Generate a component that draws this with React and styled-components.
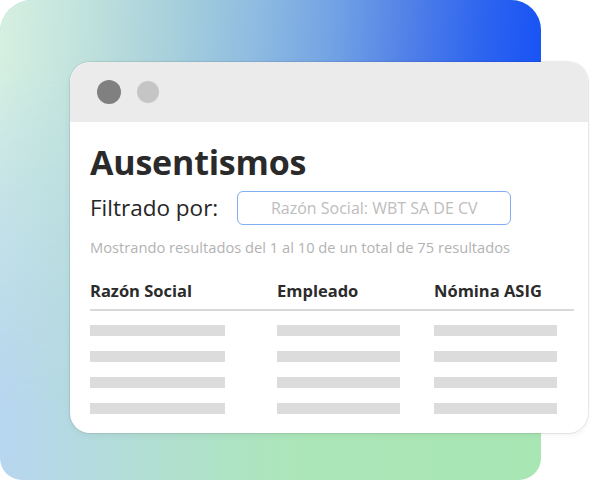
import React from 'react';
import styled, { createGlobalStyle } from 'styled-components';

const GlobalStyle = createGlobalStyle`
    html, body {
        margin: 0;
        padding: 0;
        background: #ffffff;
    }
    body {
        font-family: "Open Sans", "Noto Sans", sans-serif;
    }
`

const Stage = styled.div`
    width: 590px;
    height: 482px;
    display: grid;
    grid-template: 1fr / 1fr;
    overflow: hidden;
`

const Backdrop = styled.div`
    grid-area: 1 / 1;
    width: 541px;
    height: 480px;
    border-radius: 32px 30px 22px 22px;
    position: relative;
    overflow: hidden;
    background: linear-gradient(to right, #b7d6f0 0%, #b1dfd0 30%, #abe6b8 55%, #a8e6b4 100%);
    &::after {
        content: '';
        position: absolute;
        inset: 0;
        background: linear-gradient(94deg, #d6f0e1 0%, #bfe1dc 16%, #a4cedc 32%, #8ebbe1 45%, #73a3e4 58%, #507fe8 72%, #2e65ef 84%, #1a55f5 94%);
        -webkit-mask-image: linear-gradient(to bottom, #000 0%, #000 14%, rgba(0,0,0,0.55) 40%, transparent 85%);
        mask-image: linear-gradient(to bottom, #000 0%, #000 14%, rgba(0,0,0,0.55) 40%, transparent 85%);
    }
`

const Window = styled.div`
    grid-area: 1 / 1;
    z-index: 1;
    align-self: start;
    justify-self: start;
    margin: 62px 0 0 70px;
    width: 518px;
    height: 371px;
    border-radius: 20px;
    background: #ffffff;
    box-shadow: 0 0 0 1px rgba(0, 0, 0, 0.07), 0 2px 6px rgba(0, 0, 0, 0.06);
    overflow: hidden;
    display: flex;
    flex-direction: column;
`

const TitleBar = styled.div`
    height: 60px;
    background: #ebebeb;
    display: flex;
    align-items: center;
    gap: 16px;
    padding-left: 27px;
`

const Dot = styled.span`
    width: ${p => p.$size}px;
    height: ${p => p.$size}px;
    border-radius: 50%;
    background: ${p => p.$color};
`

const Body = styled.div`
    padding: 18px 14px 0 20px;
    display: flex;
    flex-direction: column;
`

const Title = styled.h1`
    margin: 0;
    font-size: 34px;
    font-weight: 700;
    color: #2a2a2a;
    line-height: 44px;
    letter-spacing: -0.2px;
`

const FilterRow = styled.div`
    display: flex;
    align-items: center;
    gap: 19px;
    margin-top: 7px;
`

const FilterLabel = styled.span`
    font-size: 22.5px;
    color: #262626;
    line-height: 30px;
`

const FilterBox = styled.div`
    width: 274px;
    height: 34px;
    box-sizing: border-box;
    border: 1.5px solid #80b0f2;
    border-radius: 6px;
    display: flex;
    align-items: center;
    justify-content: center;
    font-size: 16px;
    color: #bdbdbd;
`

const Summary = styled.p`
    margin: 12px 0 0;
    font-size: 14.7px;
    color: #b3b3b3;
    line-height: 20px;
`

const Table = styled.div`
    margin-top: 22px;
    display: flex;
    flex-direction: column;
`

const Row = styled.div`
    display: grid;
    grid-template-columns: 187px 157px 1fr;
`

const HeadRow = styled(Row)`
    padding-bottom: 6px;
    border-bottom: 2px solid #d9d9d9;
    margin-bottom: 14px;
`

const HeadCell = styled.span`
    font-size: 16.5px;
    font-weight: 700;
    color: #2b2b2b;
    line-height: 24px;
`

const BarRow = styled(Row)`
    height: 26px;
`

const Bar = styled.span`
    width: ${p => p.$width}px;
    height: 11px;
    background: #dcdcdc;
`

const columns = [
    { label: 'Razón Social', bar: 135 },
    { label: 'Empleado', bar: 123 },
    { label: 'Nómina ASIG', bar: 123 },
];

export default function App() {
    return (
        <Stage>
            <GlobalStyle />
            <Backdrop />
            <Window>
                <TitleBar>
                    <Dot $size={24} $color="#808080" />
                    <Dot $size={22} $color="#c5c5c5" />
                </TitleBar>
                <Body>
                    <Title>Ausentismos</Title>
                    <FilterRow>
                        <FilterLabel>Filtrado por:</FilterLabel>
                        <FilterBox>Razón Social: WBT SA DE CV</FilterBox>
                    </FilterRow>
                    <Summary>Mostrando resultados del 1 al 10 de un total de 75 resultados</Summary>
                    <Table>
                        <HeadRow>
                            {columns.map(c => <HeadCell key={c.label}>{c.label}</HeadCell>)}
                        </HeadRow>
                        {[0, 1, 2, 3].map(i => (
                            <BarRow key={i}>
                                {columns.map(c => <Bar key={c.label} $width={c.bar} />)}
                            </BarRow>
                        ))}
                    </Table>
                </Body>
            </Window>
        </Stage>
    );
}
